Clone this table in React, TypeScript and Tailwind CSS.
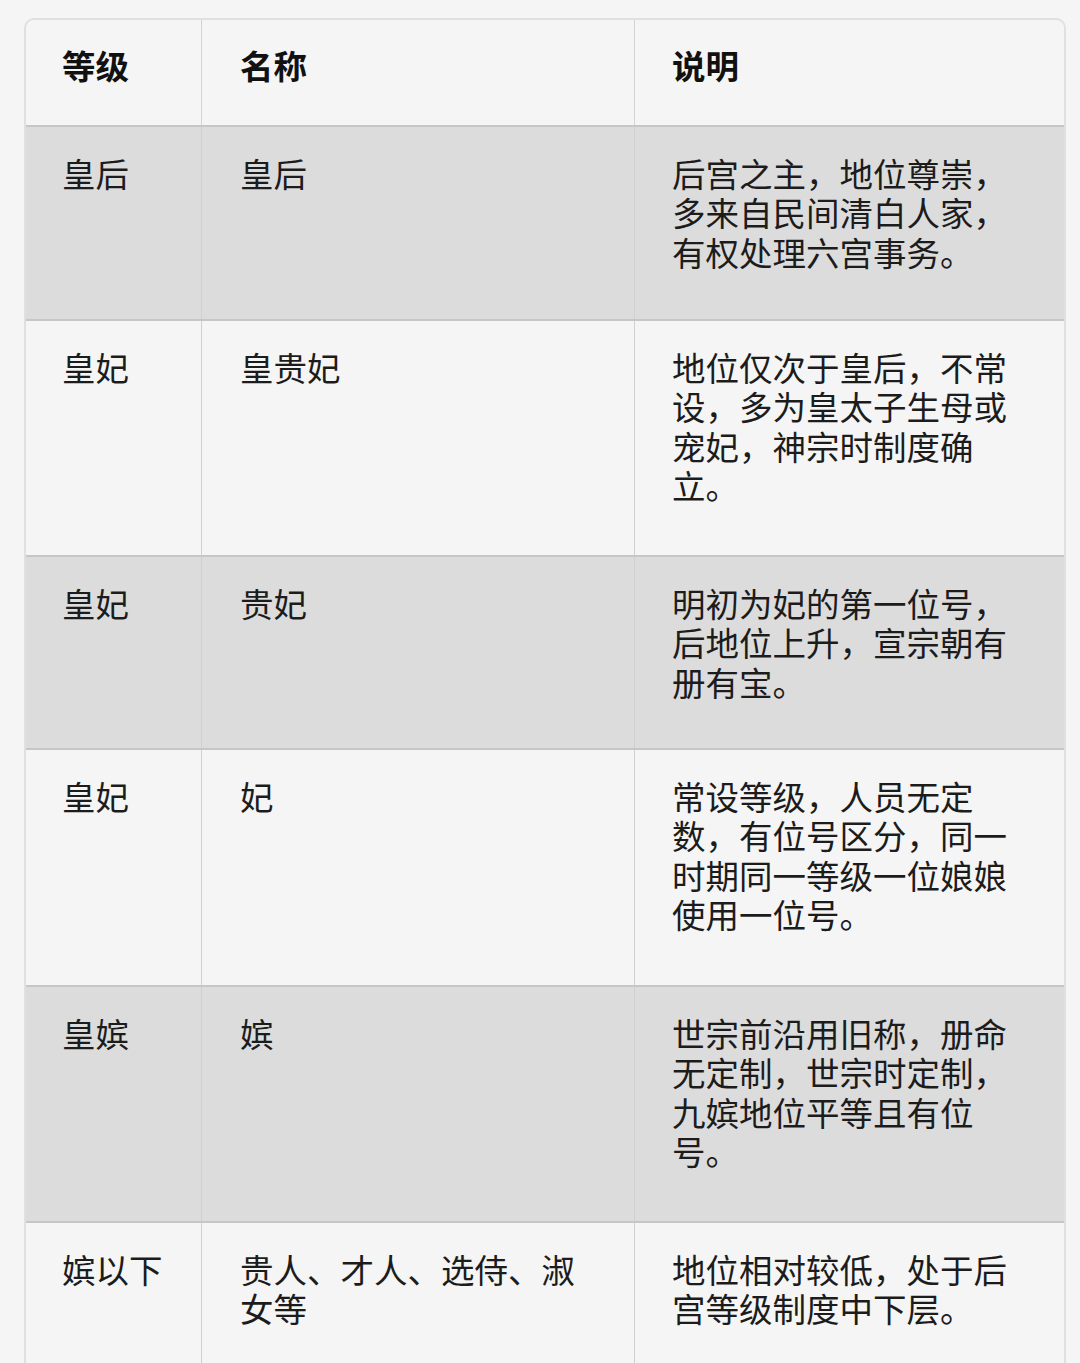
import React from "react";

type Row = { level: string; name: string; desc: string; h: string; shaded: boolean };

const rows: Row[] = [
  { level: "皇后", name: "皇后", desc: "后宫之主，地位尊崇，多来自民间清白人家，有权处理六宫事务。", h: "h-[194px]", shaded: true },
  { level: "皇妃", name: "皇贵妃", desc: "地位仅次于皇后，不常设，多为皇太子生母或宠妃，神宗时制度确立。", h: "h-[236px]", shaded: false },
  { level: "皇妃", name: "贵妃", desc: "明初为妃的第一位号，后地位上升，宣宗朝有册有宝。", h: "h-[193px]", shaded: true },
  { level: "皇妃", name: "妃", desc: "常设等级，人员无定数，有位号区分，同一时期同一等级一位娘娘使用一位号。", h: "h-[237px]", shaded: false },
  { level: "皇嫔", name: "嫔", desc: "世宗前沿用旧称，册命无定制，世宗时定制，九嫔地位平等且有位号。", h: "h-[236px]", shaded: true },
  { level: "嫔以下", name: "贵人、才人、选侍、淑女等", desc: "地位相对较低，处于后宫等级制度中下层。", h: "h-[200px]", shaded: false },
];

const font = { fontFamily: '"Noto Sans CJK SC", "Noto Sans", sans-serif' };

export default function App() {
  return (
    <div className="w-[1080px] h-[1363px] overflow-hidden bg-[#f5f5f5] pt-[18px] pl-[24px] pr-[14px]" style={font}>
      <div className="border-2 border-b-0 border-[#e0e0e0] rounded-t-[10px] overflow-hidden text-[33.5px] leading-[39.3px] text-[#1c1c1c]">
        <div className="grid grid-cols-[175px_433px_1fr] h-[105px] font-bold text-[#111]">
          <div className="pl-[36px] pt-[25px]">等级</div>
          <div className="pl-[38px] pt-[25px] border-l border-[#d4d4d4]">名称</div>
          <div className="pl-[37px] pt-[25px] border-l border-[#d4d4d4]">说明</div>
        </div>
        {rows.map((r, i) => (
          <div
            key={i}
            className={`grid grid-cols-[175px_433px_1fr] border-t-2 border-[#c6c6c6] ${r.h} ${r.shaded ? "bg-[#dcdcdc]" : "bg-[#f5f5f5]"}`}
          >
            <div className="pl-[36px] pt-[26px]">{r.level}</div>
            <div className="pl-[38px] pr-[38px] pt-[26px] border-l border-[#d0d0d0]">{r.name}</div>
            <div className="pl-[37px] pr-[37px] pt-[26px] border-l border-[#d0d0d0]">{r.desc}</div>
          </div>
        ))}
      </div>
    </div>
  );
}
